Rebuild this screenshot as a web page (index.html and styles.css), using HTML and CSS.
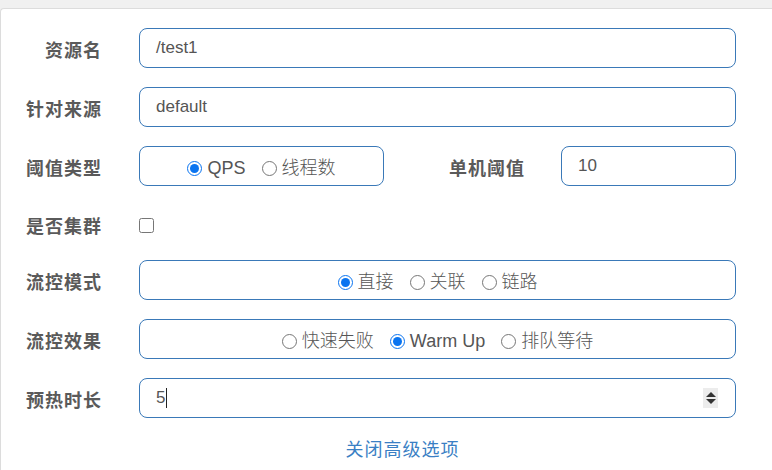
FILE: index.html
```html
<!DOCTYPE html>
<html>
<head>
<meta charset="utf-8">
<link rel="stylesheet" href="styles.css">
</head>
<body>
<div class="panel">
  <div class="form">
    <div class="label">资源名</div>
    <div class="field text">/test1</div>

    <div class="label">针对来源</div>
    <div class="field text">default</div>

    <div class="label">阈值类型</div>
    <div class="split">
      <div class="field radios small">
        <label class="opt"><input type="radio" name="g" checked><span>QPS</span></label>
        <label class="opt"><input type="radio" name="g"><span>线程数</span></label>
      </div>
      <div class="label sublabel">单机阈值</div>
      <div class="field text narrow">10</div>
    </div>

    <div class="label short">是否集群</div>
    <div class="check"><input type="checkbox"></div>

    <div class="label">流控模式</div>
    <div class="field radios">
      <label class="opt"><input type="radio" name="m" checked><span>直接</span></label>
      <label class="opt"><input type="radio" name="m"><span>关联</span></label>
      <label class="opt"><input type="radio" name="m"><span>链路</span></label>
    </div>

    <div class="label">流控效果</div>
    <div class="field radios">
      <label class="opt"><input type="radio" name="e"><span>快速失败</span></label>
      <label class="opt"><input type="radio" name="e" checked><span>Warm Up</span></label>
      <label class="opt"><input type="radio" name="e"><span>排队等待</span></label>
    </div>

    <div class="label">预热时长</div>
    <div class="field text number">
      <span class="val">5<span class="caret"></span></span>
      <span class="spin"><span class="up"></span><span class="down"></span></span>
    </div>
  </div>
  <div class="linkrow"><a class="link">关闭高级选项</a></div>
</div>
</body>
</html>
```

FILE: styles.css
```css
* { box-sizing: border-box; }
html, body { margin: 0; padding: 0; }
body {
  background: #f0f0f0;
  font-family: "Liberation Sans", "Noto Sans CJK SC", sans-serif;
  width: 772px;
  height: 470px;
  overflow: hidden;
}
.panel {
  margin-top: 8px;
  background: #fff;
  border-top: 1px solid #dcdcdc;
  border-left: 1px solid #dcdcdc;
  border-top-left-radius: 4px;
  height: 462px;
  padding-top: 19px;
}
.form {
  display: grid;
  grid-template-columns: 100px 597px;
  column-gap: 38px;
  row-gap: 19px;
}
.label {
  font-family: "Noto Sans CJK SC", sans-serif;
  font-weight: bold;
  font-size: 18px;
  color: #5a5a5a;
  text-align: right;
  display: flex;
  align-items: center;
  justify-content: flex-end;
  height: 40px;
  padding-top: 1px;
  letter-spacing: 1px;
  margin-right: -1px;
}
.label.short { height: 36px; padding-top: 4px; }
.field {
  height: 40px;
  border: 1px solid #3a79b8;
  border-radius: 8px;
  display: flex;
  align-items: center;
  font-size: 17px;
  color: #555;
}
.text { padding-left: 16px; }
.split { display: flex; align-items: center; }
.small { width: 245px; }
.sublabel { flex: 1; padding-right: 37px; }
.narrow { width: 175px; }
.radios { justify-content: center; gap: 16px; padding-top: 4px; }
.opt { display: flex; align-items: center; font-family: "Liberation Sans", "Noto Sans CJK SC", sans-serif; font-size: 18px; color: #555; }
.opt input { margin: 0 5px 0 0; width: 15px; height: 15px; accent-color: #0a74f0; }
.opt span { line-height: 20px; font-weight: 300; }
.check { height: 36px; padding-top: 4px; display: flex; align-items: center; }
.check input { margin: 0; width: 15px; height: 15px; }
.number { justify-content: space-between; padding-right: 17px; }
.val { display: flex; align-items: center; }
.caret { display: inline-block; width: 1px; height: 20px; background: #222; margin-left: 1px; }
.spin {
  width: 15px;
  height: 20px;
  background: #ececec;
  display: flex;
  flex-direction: column;
  align-items: center;
  justify-content: center;
  gap: 2px;
}
.up { width: 0; height: 0; border-left: 5px solid transparent; border-right: 5px solid transparent; border-bottom: 5px solid #333; }
.down { width: 0; height: 0; border-left: 5px solid transparent; border-right: 5px solid transparent; border-top: 5px solid #333; }
.linkrow { text-align: center; padding-left: 32px; margin-top: 17px; }
.link { font-family: "Noto Sans CJK SC", sans-serif; font-size: 18px; color: #3a7fc4; letter-spacing: 1px; }
```
